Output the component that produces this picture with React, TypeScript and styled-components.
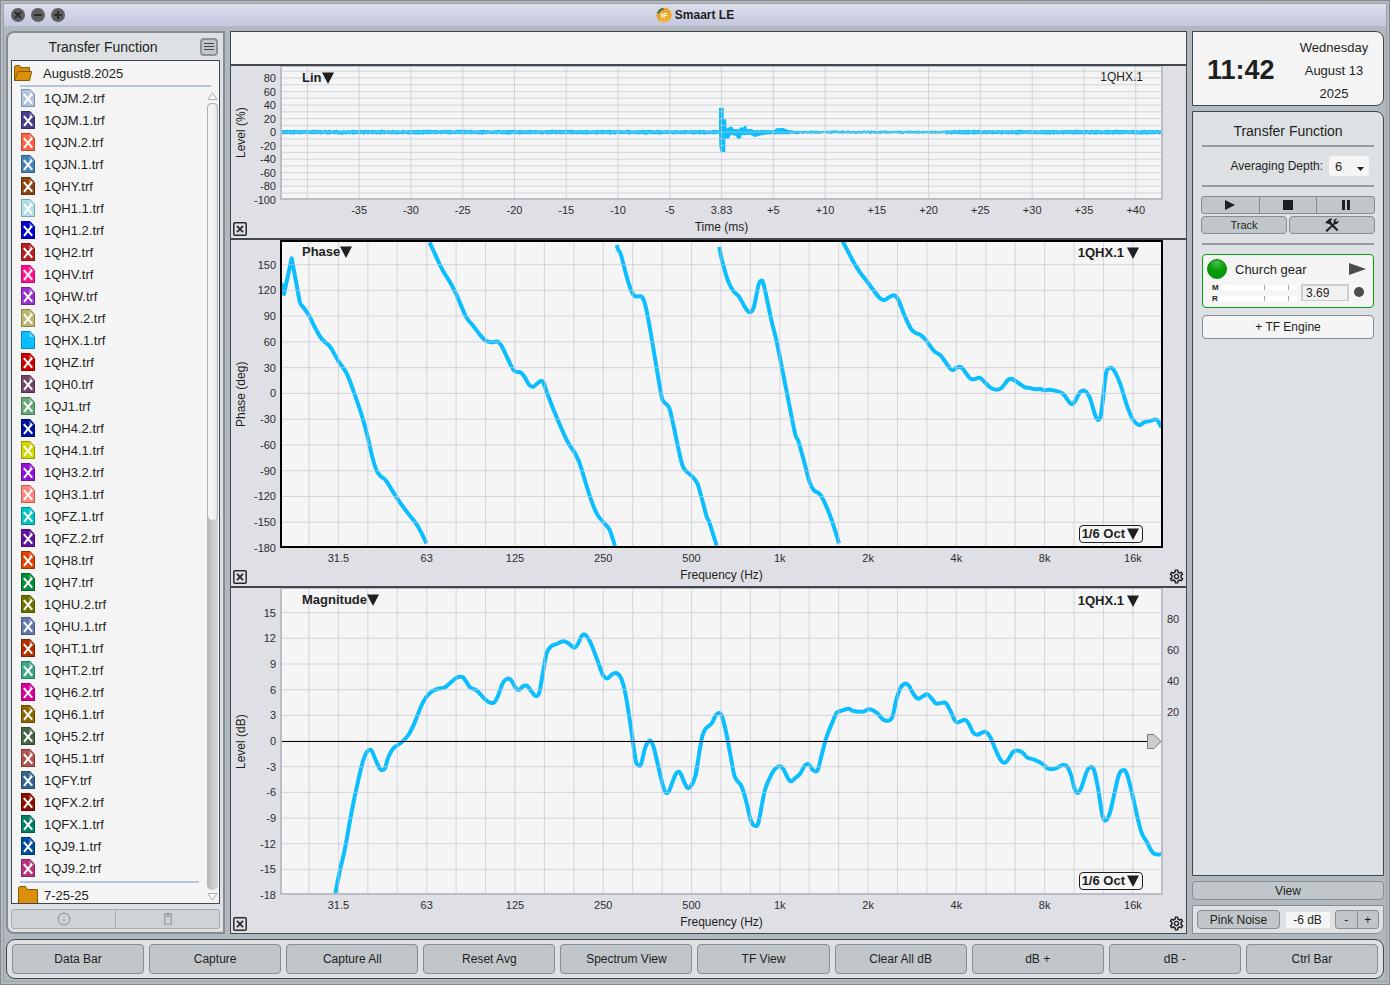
import React from "react";
import styled, { createGlobalStyle } from "styled-components";
import { MdOutlineDelete, MdOutlineSettings } from "react-icons/md";
import { Info } from "lucide-react";

const color = {
  ink: "#1e1f21",
  line: "#41484d",
  edge: "#858e94",
  chrome: "#b1b9bf",
  panel: "#dde1e4",
  paper: "#f5f5f5",
  button: "#c0c6ca",
  chart: "#dfe0e5",
  grid: "rgba(196, 199, 208, 0.7)",
  trace: "#0bbeff",
};

const GlobalStyle = createGlobalStyle`
  *, *::before, *::after { box-sizing: border-box; }
  body {
    margin: 0;
    background: ${color.chrome};
    color: ${color.ink};
    font-family: "Liberation Sans", Arial, Helvetica, sans-serif;
    font-size: 12px;
  }
  button, input, select { font: inherit; color: inherit; margin: 0; padding: 0; }
  button { cursor: pointer; }
  svg { display: block; }
`;

/* ---------- window frame ---------- */

const Frame = styled.div`
  height: 100vh;
  min-height: 720px;
  min-width: 1000px;
  display: flex;
  border: 1px solid #85898d;
  padding: 2px;
  background: #b5babe;
`;

const Inner = styled.div`
  flex: 1;
  min-width: 0;
  display: flex;
  flex-direction: column;
  border: 1px solid #9aa1a7;
  background: ${color.chrome};
`;

const TitleBar = styled.header`
  position: relative;
  height: 22px;
  flex: none;
  display: flex;
  align-items: center;
  justify-content: center;
  gap: 3px;
  background: linear-gradient(#dcdeec, #c4c7de);
`;

const AppName = styled.h1`
  margin: 0;
  font-size: 12px;
  line-height: 16px;
  font-weight: bold;
`;

const WindowButtons = styled.div`
  position: absolute;
  left: 7px;
  top: 4px;
  display: flex;
  gap: 6px;
`;

const WindowButton = styled.button`
  width: 14px;
  height: 14px;
  border: 0;
  border-radius: 50%;
  background: #5f5f61;
  color: #2c2c2e;
`;

const Workspace = styled.div`
  flex: 1;
  min-height: 0;
  display: flex;
  flex-direction: column;
  gap: 5px;
  padding: 5px 2px 2px;
`;

const Columns = styled.div`
  flex: 1;
  min-height: 0;
  display: grid;
  grid-template-columns: 219px minmax(0, 1fr) 192px;
  grid-template-rows: minmax(0, 1fr);
  gap: 5px;
`;

/* ---------- data bar ---------- */

const DataBar = styled.aside`
  display: flex;
  flex-direction: column;
  padding: 0 3px 3px;
  border: 2px solid ${color.edge};
  border-radius: 8px 0 0 8px;
  background: ${color.panel};
`;

const DataHead = styled.div`
  flex: none;
  height: 27px;
  display: flex;
  align-items: center;
  padding-right: 2px;
`;

const PanelTitle = styled.h2`
  flex: 1;
  margin: 0;
  font-size: 14px;
  line-height: 20px;
  font-weight: normal;
  text-align: center;
`;

const DataTitle = styled(PanelTitle)`
  padding-right: 5px;
`;

const MenuButton = styled.button`
  width: 18px;
  height: 18px;
  display: grid;
  place-items: center;
  border: 2px solid #8d9498;
  border-radius: 4px;
  background: #c3c8cb;
`;

const ListBox = styled.div`
  flex: 1;
  min-height: 0;
  overflow: hidden;
  display: flex;
  flex-direction: column;
  border: 1px solid ${color.line};
  background: ${color.paper};
  font-size: 13px;
`;

const FolderRow = styled.div<{ $open?: boolean }>`
  flex: none;
  height: 24px;
  display: flex;
  align-items: center;
  gap: ${(p) => (p.$open ? 11 : 6)}px;
  padding-left: ${(p) => (p.$open ? 2 : 6)}px;
`;

const Divider = styled.div<{ $wide?: boolean }>`
  flex: none;
  height: 2px;
  margin: ${(p) => (p.$wide ? "0 8px" : "2px 8px 0")};
  background: #b9c6da;
`;

const ListScroll = styled.div`
  flex: 1;
  min-height: 0;
  display: grid;
  grid-template-columns: minmax(0, 1fr) 12px;
  grid-template-rows: minmax(0, 1fr);
`;

const Files = styled.div`
  overflow: hidden;
`;

const FileList = styled.ul`
  margin: 0;
  padding: 0;
  list-style: none;
`;

const FileRow = styled.li`
  height: 22px;
  display: flex;
  align-items: center;
  gap: 9px;
  padding-left: 9px;
`;

const FileName = styled.span`
  padding-top: 1px;
  line-height: 21px;
`;

const ScrollBar = styled.div`
  display: flex;
  flex-direction: column;
  gap: 3px;
  padding: 5px 1px 2px 0;
`;

const ScrollTrack = styled.div`
  flex: 1;
  border-radius: 5px;
  background: linear-gradient(90deg, #b4b4b4, #cfcfcf 60%, #d6d6d6);
`;

const ScrollThumb = styled.div`
  height: 53%;
  border: 1px solid #b0b0b0;
  border-bottom-color: #e8e8e8;
  border-radius: 5px;
  background: linear-gradient(90deg, #f4f4f4 40%, #e6e6e6);
`;

const Segmented = styled.div<{ $height: number }>`
  flex: none;
  height: ${(p) => p.$height}px;
  display: flex;
  overflow: hidden;
  border: 1px solid ${color.edge};
  border-radius: 3px;
  background: ${color.button};
`;

const DataTools = styled(Segmented)`
  margin-top: 5px;
  border-color: #a7adb2;
  background: #ced3d6;
`;

const Segment = styled.button<{ $soft?: boolean }>`
  flex: 1;
  display: grid;
  place-items: center;
  border: 0 solid ${(p) => (p.$soft ? "#a7adb2" : color.edge)};
  background: transparent;
  color: ${(p) => (p.$soft ? "#979ca0" : color.ink)};
  &:not(:first-child) {
    border-left-width: 1px;
  }
`;

/* ---------- charts ---------- */

const Charts = styled.main`
  display: grid;
  grid-template-rows: 32px minmax(0, 172fr) minmax(0, 346fr) minmax(0, 345fr);
  gap: 2px;
  border: 1px solid ${color.line};
  background: ${color.line};
`;

const Readout = styled.div`
  background: ${color.paper};
`;

const ChartPane = styled.section`
  display: grid;
  grid-template-columns: 49px minmax(0, 1fr) 23px;
  grid-template-rows: minmax(0, 1fr) 18px 20px;
  background: ${color.chart};
`;

const YAxis = styled.div`
  position: relative;
`;

const AxisName = styled.div`
  position: absolute;
  left: 2px;
  top: 0;
  bottom: 0;
  line-height: 16px;
  text-align: center;
  writing-mode: vertical-rl;
  transform: rotate(180deg);
`;

const Ticks = styled.svg`
  width: 100%;
  height: 100%;
  overflow: visible;
  font-size: 11px;
  fill: #2c2d30;
`;

const XTicks = styled(Ticks)`
  grid-column: 2;
`;

const Plot = styled.div<{ $active?: boolean }>`
  position: relative;
  background: ${color.paper};
  &::after {
    content: "";
    position: absolute;
    inset: 0;
    border: 2px solid ${(p) => (p.$active ? "#000" : "#bbbdc4")};
    border-top-width: ${(p) => (p.$active ? 2 : 1)}px;
    pointer-events: none;
  }
`;

const PlotArea = styled.svg`
  position: absolute;
  inset: 0;
  width: 100%;
  height: 100%;
`;

const PlotButton = styled.button<{ $place: "type" | "trace" | "oct" }>`
  position: absolute;
  z-index: 1;
  display: flex;
  align-items: center;
  gap: ${(p) => (p.$place === "trace" ? 3 : p.$place === "oct" ? 2 : 0)}px;
  height: 18px;
  line-height: 18px;
  font-size: 13px;
  font-weight: bold;
  border: 0;
  background: transparent;
  ${(p) => p.$place === "type" && "left: 22px; top: 3px;"}
  ${(p) => p.$place === "trace" && "right: 24px; top: 4px;"}
  ${(p) =>
    p.$place === "oct" &&
    `right: 20px; bottom: 5px; padding: 0 3px 0 2px; line-height: 14px;
     border: 1px solid ${color.ink}; border-radius: 4px; background: ${color.paper};`}
`;

const TraceName = styled.div`
  position: absolute;
  z-index: 1;
  right: 20px;
  top: 3px;
  line-height: 16px;
`;

const CornerButton = styled.button<{ $side: "left" | "right" }>`
  grid-row: 3;
  align-self: end;
  justify-self: ${(p) => (p.$side === "left" ? "start" : "end")};
  margin: ${(p) => (p.$side === "left" ? "0 0 2px 2px" : "0 1px 1px 0")};
  border: 0;
  background: transparent;
`;

const XName = styled.div`
  grid-column: 2;
  grid-row: 3;
  line-height: 19px;
  text-align: center;
`;

/* ---------- control bar ---------- */

const ControlBar = styled.aside`
  display: flex;
  flex-direction: column;
  gap: 5px;
`;

const Clock = styled.div`
  flex: none;
  height: 75px;
  display: flex;
  align-items: center;
  justify-content: space-between;
  padding: 3px 8px 0 14px;
  border: 1px solid ${color.line};
  border-radius: 0 8px 8px 0;
  background: ${color.paper};
`;

const Time = styled.div`
  font-size: 27px;
  font-weight: bold;
`;

const DateLines = styled.div`
  width: 82px;
  font-size: 13px;
  line-height: 23px;
  text-align: center;
`;

const Controls = styled.section`
  flex: 1;
  min-height: 0;
  padding: 0 9px;
  display: flex;
  flex-direction: column;
  border: 1px solid ${color.line};
  border-radius: 0 8px 0 0;
  background: ${color.panel};
`;

const ControlsTitle = styled(PanelTitle)`
  flex: none;
  line-height: 34px;
  padding-top: 2px;
  height: 33px;
`;

const Rule = styled.hr`
  flex: none;
  width: 100%;
  height: 2px;
  margin: 0;
  border: 0;
  background: #959a9e;
`;

const DepthRow = styled.label`
  flex: none;
  height: 38px;
  display: flex;
  align-items: center;
  justify-content: flex-end;
  gap: 6px;
  padding-right: 5px;
`;

const SelectWrap = styled.span`
  position: relative;
  display: block;
`;

const DepthSelect = styled.select`
  appearance: none;
  display: block;
  width: 40px;
  height: 20px;
  padding-left: 6px;
  border: 0;
  border-radius: 3px;
  background: ${color.paper};
  font-size: 13px;
`;

const SelectArrow = styled.svg`
  position: absolute;
  right: 5px;
  bottom: 5px;
  pointer-events: none;
`;

const Transport = styled(Segmented)`
  margin: 9px -1px 0;
`;

const ToolRow = styled.div`
  display: grid;
  grid-template-columns: 1fr 1fr;
  gap: 2px;
  margin: 2px -1px 9px;
`;

const Button = styled.button<{ $height: number; $size?: number }>`
  height: ${(p) => p.$height}px;
  display: grid;
  place-items: center;
  border: 1px solid ${color.edge};
  border-radius: 4px;
  background: ${color.button};
  font-size: ${(p) => p.$size ?? 12}px;
`;

const EngineCard = styled.div`
  flex: none;
  height: 54px;
  margin: 9px 0 7px;
  padding: 4px 7px 0 4px;
  border: 1px solid #0b9d12;
  border-radius: 4px;
  background: ${color.paper};
`;

const EngineTop = styled.div`
  height: 20px;
  display: flex;
  align-items: center;
  gap: 8px;
  font-size: 13px;
`;

const StatusLight = styled.span`
  width: 20px;
  height: 20px;
  border: 1px solid #078a0b;
  border-radius: 50%;
  background: radial-gradient(circle at 50% 15%, #4cc04c, #049b06 50%);
`;

const EngineName = styled.span`
  flex: 1;
`;

const EngineBottom = styled.div`
  display: flex;
  align-items: center;
  gap: 4px;
  margin-top: 3px;
  padding-left: 5px;
`;

const Meters = styled.div`
  flex: 1;
  display: grid;
  gap: 1px;
`;

const MeterRow = styled.div`
  height: 10px;
  display: flex;
  align-items: center;
  font-size: 8px;
  font-weight: bold;
`;

const MeterLabel = styled.span`
  width: 7px;
`;

const MeterTrack = styled.span`
  flex: 1;
  display: grid;
  grid-template-columns: 58fr 30fr 12fr;
  height: 5px;
  background: #fff;
`;

const MeterZone = styled.span`
  &:not(:first-child) {
    border-left: 1px solid #a4a4a4;
  }
`;

const DelayInput = styled.input`
  width: 48px;
  height: 17px;
  padding-left: 3px;
  border: 2px solid #cccdce;
  border-bottom-width: 1px;
  background: #f1f1f1;
  font-size: 12px;
`;

const Dot = styled.span`
  width: 10px;
  height: 10px;
  margin: 0 2px 2px 1px;
  border-radius: 50%;
  background: #4c4c4c;
`;

const EngineButton = styled(Button)`
  flex: none;
  background: ${color.paper};
`;

const ViewButton = styled(Button)`
  flex: none;
`;

const Generator = styled.div`
  flex: none;
  height: 29px;
  display: flex;
  align-items: center;
  justify-content: space-between;
  padding: 0 4px;
  border: 1px solid ${color.edge};
  border-radius: 0 0 8px 0;
  background: ${color.panel};
`;

const NoiseButton = styled(Button)`
  width: 83px;
`;

const GainInput = styled.input`
  width: 44px;
  height: 16px;
  border: 0;
  background: ${color.paper};
  text-align: center;
`;

const GainButtons = styled(Segmented)`
  width: 44px;
`;

const CommandBar = styled.nav`
  flex: none;
  height: 40px;
  display: flex;
  gap: 5px;
  padding: 4px 5px;
  border: 1px solid ${color.line};
  border-radius: 9px;
  background: ${color.panel};
`;

const CommandButton = styled(Button)`
  flex: 1;
`;

/* ---------- icons ---------- */

const Triangle = () => (
  <svg width="12" height="12" viewBox="0 0 12 12" aria-hidden="true">
    <path d="M0 0.5H12L6 12Z" fill={color.ink} />
  </svg>
);

const Logo = () => (
  <svg width="16" height="16" viewBox="0 0 16 16" aria-hidden="true">
    <circle cx="8" cy="8" r="7.6" fill="#eda527" />
    <path d="M2 6.4A6.4 6.4 0 0 1 7.6 1.9" stroke="#25775f" strokeWidth="2" fill="none" />
    <path d="M13 11.5A6.2 6.2 0 0 1 4 12.5" stroke="#f9cf6b" strokeWidth="1" fill="none" />
    <text x="8.4" y="10.9" fontSize="8" fontWeight="bold" fill="#fff" textAnchor="middle">
      iF
    </text>
  </svg>
);

const WindowGlyph = ({ d }: { d: string }) => (
  <svg width="14" height="14" viewBox="0 0 14 14" fill="none" stroke="currentColor" strokeWidth="2">
    <path d={d} />
  </svg>
);

const FolderOpen = () => (
  <svg width="18" height="16" viewBox="0 0 18 16" aria-hidden="true">
    <path d="M.5 15.5V1.5L1.5.5H5.5L7 2.5H15.5V7" fill="#d98c0a" stroke="#8a5a08" />
    <path d="M.5 15.5L4.2 6.5H17.6L15.6 15.5Z" fill="#dc8f0b" stroke="#8a5a08" strokeLinejoin="round" />
  </svg>
);

const FolderClosed = () => (
  <svg width="20" height="18" viewBox="0 0 20 18" aria-hidden="true">
    <path d="M.5 17.5V1.5L1.5.5H7.5L9 3.5H19.5V17.5Z" fill="#dc8f0b" stroke="#8a5a08" />
  </svg>
);

const FileIcon = ({ fill, marked }: { fill: string; marked: boolean }) => (
  <svg width="14" height="18" viewBox="0 0 14 18" aria-hidden="true">
    <path d="M0 0H9L14 5.5V18H0Z" fill={fill} />
    <path d="M.5.5H9L13.5 5.5V17.5H.5Z" fill="none" stroke="#000" strokeOpacity=".26" />
    <path d="M8.5 1.5V6H12.6Z" fill="#fff" fillOpacity=".45" />
    {marked && <path d="M2.8 5.2L11.2 14.6M11 5L3 14.8" stroke="#fff" strokeWidth="2" />}
  </svg>
);

const CloseBox = () => (
  <svg width="14" height="14" viewBox="0 0 14 14" fill="none" stroke="#2b2b2d">
    <rect x=".8" y=".8" width="12.4" height="12.4" rx="1" strokeWidth="1.5" />
    <path d="M4 3.8L10 10.2M10 3.8L4 10.2" strokeWidth="1.8" />
  </svg>
);

const Tools = () => (
  <svg width="14" height="14" viewBox="0 0 14 14" aria-hidden="true" fill={color.ink}>
    <path d="M3.6 5.2L5.4 3.6L13.4 11.8L12 13.2Z" />
    <path d="M.4 4.6L3.6 1.4Q5.6 0 7.6 1L5.8 2.4L6.4 3.4L3.4 6L2.6 5.2L1.6 5.8Z" />
    <path d="M1 12L8.6 5.2Q7.8 2.6 9.6 1.2Q10.8.4 12 .7L10.2 2.8L11.2 3.9L13.5 2.3Q13.8 4.4 12.4 5.6Q11.2 6.6 9.8 6.3L2.6 13.4Q1.6 14 .8 13.2Q.4 12.6 1 12Z" />
  </svg>
);

const ScrollArrow = ({ d }: { d: string }) => (
  <svg width="11" height="8" viewBox="0 0 11 8" fill="#fafafa" stroke="#adadad">
    <path d={d} />
  </svg>
);

/* ---------- trace data ---------- */

type Pt = [number, number];

/* Catmull-Rom spline through the measured points. */
const smooth = (flat: number[], shift = 0) => {
  const p: Pt[] = [];
  for (let i = 0; i < flat.length; i += 2) p.push([flat[i] + shift, flat[i + 1]]);
  let d = `M${p[0][0]} ${p[0][1]}`;
  for (let i = 0; i < p.length - 1; i++) {
    const a = p[i - 1] ?? p[i];
    const b = p[i];
    const c = p[i + 1];
    const e = p[i + 2] ?? c;
    d += `C${b[0] + (c[0] - a[0]) / 6} ${b[1] + (c[1] - a[1]) / 6} ${c[0] - (e[0] - b[0]) / 6} ${c[1] - (e[1] - b[1]) / 6} ${c[0]} ${c[1]}`;
  }
  return d;
};

const HALF = 1380;

const phaseTraces = [
  "M154 145L162 177L185 70L198 140L210 205" + smooth([210, 205, 235, 238, 256, 280, 276, 313, 300, 335, 325, 378, 350, 415, 373, 475, 398, 550, 414, 610, 428, 670, 440, 707, 452, 724, 468, 737, 500, 788, 530, 830, 558, 865, 575, 895, 589, 925]),
  smooth([599, 22, 630, 90, 645, 118, 662, 145, 679, 178, 708, 245, 730, 273, 748, 297, 767, 317, 783, 322, 803, 320, 815, 333, 835, 375, 850, 404, 858, 410, 873, 413, 885, 428, 898, 450, 910, 455, 920, 447, 932, 438, 940, 442, 950, 470, 975, 535, 1010, 615, 1035, 655, 1050, 688, 1080, 785, 1100, 835, 1120, 862, 1138, 883, 1155, 933]),
  smooth([1160, 30, 1165, 45, 1173, 60, 1190, 125, 1205, 170, 1215, 184, 1235, 185, 1245, 207, 1258, 270, 1280, 400, 1295, 485, 1303, 502, 1317, 517, 1328, 560, 1345, 640, 1357, 690, 1367, 707, 1385, 723, 1402, 745, 1414, 785, 1430, 845, 1438, 862, 1460, 932]),
  smooth([88, 36, 94, 68, 104, 105, 115, 140, 130, 168, 147, 185, 160, 208, 172, 227, 182, 231, 192, 215, 205, 152, 213, 137, 222, 152, 245, 260, 260, 320, 290, 470, 315, 595, 325, 618, 345, 690, 360, 745, 372, 766, 390, 778, 405, 805, 425, 855, 447, 925], HALF),
  smooth([457, 17, 490, 80, 512, 115, 530, 138, 550, 165, 570, 190, 585, 195, 597, 187, 612, 181, 625, 195, 645, 245, 662, 280, 675, 293, 690, 299, 705, 312, 732, 348, 752, 362, 780, 400, 790, 405, 800, 398, 815, 398, 840, 430, 855, 432, 868, 428, 880, 437, 900, 457, 920, 464, 935, 458, 955, 434, 967, 432, 985, 444, 1005, 457, 1020, 459, 1035, 463, 1050, 462, 1065, 466, 1080, 464, 1105, 470, 1120, 477, 1140, 504, 1150, 506, 1160, 490, 1172, 470, 1187, 469, 1200, 490, 1218, 547, 1230, 550, 1238, 500, 1248, 415, 1257, 400, 1270, 403, 1290, 445, 1312, 515, 1328, 552, 1347, 570, 1362, 562, 1380, 558, 1400, 554, 1414, 577], HALF),
];

const magnitudeTraces = [
  smooth([315, 930, 330, 855, 345, 790, 365, 680, 385, 585, 400, 525, 410, 502, 417, 496, 425, 497, 437, 525, 450, 552, 457, 555, 465, 550, 475, 517, 490, 490, 515, 472, 535, 450, 553, 415, 575, 360, 590, 335, 605, 320, 625, 311, 645, 307, 665, 290, 682, 277, 700, 278, 720, 307, 740, 316, 765, 343, 780, 353, 793, 352, 805, 330, 818, 295, 830, 282, 842, 284, 858, 310, 868, 314, 880, 303, 892, 303, 905, 320, 917, 333, 928, 322, 940, 255, 950, 205, 962, 185, 980, 177, 1000, 169, 1015, 175, 1032, 188, 1043, 178, 1055, 153, 1065, 149, 1080, 170, 1100, 220, 1115, 262, 1122, 275, 1133, 280, 1145, 269, 1158, 264, 1172, 277, 1185, 320, 1200, 410, 1210, 480, 1218, 530, 1225, 541, 1233, 538, 1245, 490, 1255, 470, 1263, 468, 1272, 490, 1285, 545, 1297, 595, 1305, 620, 1315, 622, 1325, 598, 1338, 566, 1350, 563, 1362, 590, 1373, 609, 1385, 600, 1397, 570, 1402, 540]),
  smooth([17, 570, 22, 540, 30, 490, 38, 450, 48, 430, 65, 415, 78, 390, 90, 385, 98, 400, 110, 450, 125, 530, 135, 577, 155, 605, 170, 655, 182, 705, 192, 721, 203, 720, 210, 690, 225, 615, 245, 567, 258, 549, 272, 544, 283, 557, 295, 582, 305, 589, 315, 580, 330, 567, 345, 541, 357, 539, 370, 556, 383, 555, 395, 510, 410, 455, 430, 405, 440, 383, 452, 378, 475, 371, 490, 378, 518, 380, 538, 373, 560, 383, 580, 404, 598, 406, 608, 393, 620, 340, 632, 308, 645, 296, 657, 303, 672, 330, 685, 341, 700, 333, 713, 328, 727, 343, 740, 356, 765, 353, 780, 375, 795, 407, 805, 412, 825, 404, 837, 418, 850, 443, 863, 449, 885, 440, 900, 455, 915, 490, 932, 525, 945, 533, 957, 520, 970, 500, 985, 497, 998, 503, 1012, 518, 1030, 523, 1055, 535, 1075, 551, 1095, 551, 1118, 540, 1132, 545, 1143, 570, 1155, 615, 1165, 623, 1175, 605, 1190, 560, 1200, 547, 1212, 555, 1225, 615, 1238, 695, 1250, 704, 1262, 675, 1285, 575, 1298, 556, 1310, 565, 1325, 620, 1352, 735, 1370, 770, 1390, 805, 1414, 808], HALF),
];

/* Noise floor of the impulse response, from a fixed-seed generator. */
const noiseFloor = (() => {
  let seed = 7;
  const next = () => (seed = (seed * 16807) % 2147483647) / 2147483647;
  let top = "";
  let bottom = "";
  for (let x = 152; x <= 2796; x += 3) {
    const quiet = x > 1680 && x < 2150 ? 2 : 0;
    top += `L${x} ${(212 + quiet - next() * 3).toFixed(1)}`;
    bottom = `L${x} ${(221 - quiet + next() * 3).toFixed(1)}` + bottom;
  }
  return `M152 216${top}${bottom}Z`;
})();

const impulse =
  "M1467 214V143H1481V178H1488L1490 206L1500 200L1507 200L1510 207L1527 208L1533 201L1541 203V198H1549L1550 207L1566 208L1572 213L1600 216L1628 213L1640 205L1660 204L1672 209L1695 213H1706V217L1702 224L1690 218L1650 218L1610 223L1588 227L1575 231L1560 224L1535 226L1532 236H1522L1518 228L1502 224L1497 236H1486V276H1472L1468 258Z";

const freqLines = Array.from({ length: 29 }, (_, k) => (87 + k * 88.28) / 26.49);
const freqTicks = ["31.5", "63", "125", "250", "500", "1k", "2k", "4k", "8k", "16k"].map(
  (label, i) => ({ label, at: freqLines[1 + i * 3] }),
);

const timeLines = Array.from({ length: 17 }, (_, k) => (27.4 + k * 51.77) / 8.83);
const timeTicks = ["-35", "-30", "-25", "-20", "-15", "-10", "-5", "3.83", "+5", "+10", "+15", "+20", "+25", "+30", "+35", "+40"].map(
  (label, i) => ({ label, at: timeLines[i + 1] }),
);

const range = (from: number, step: number, count: number, start: number, pitch: number) =>
  Array.from({ length: count }, (_, i) => ({ label: String(from + step * i), at: start + pitch * i }));

const levelTicks = range(80, -20, 10, 8.96, 10.1);
const levelLines = Array.from({ length: 20 }, (_, i) => 3.9 + i * 5.05);
const phaseTicks = range(150, -30, 12, 8.01, 8.363);
const dbTicks = range(15, -3, 12, 8.03, 8.363);
const coherenceTicks = range(80, -20, 4, 10.2, 10.1);

/* ---------- chart ---------- */

interface Tick {
  label: string;
  at: number;
}

interface ChartProps {
  title: string;
  yName: string;
  xName: string;
  xLines: number[];
  yLines: number[];
  xTicks: Tick[];
  yTicks: Tick[];
  rightTicks?: Tick[];
  viewBox: string;
  traces: string[];
  filled?: boolean;
  active?: boolean;
  zeroAt?: number;
}

const Chart = (p: ChartProps) => (
  <ChartPane aria-label={p.title}>
    <YAxis>
      <AxisName>{p.yName}</AxisName>
      <Ticks>
        {p.yTicks.map((t) => (
          <text key={t.label} x="45" y={`${t.at}%`} dy="4" textAnchor="end">
            {t.label}
          </text>
        ))}
      </Ticks>
    </YAxis>
    <Plot $active={p.active}>
      <PlotArea>
        <svg width="100%" height="100%" viewBox={p.viewBox} preserveAspectRatio="none">
          {p.traces.map((d) => (
            <path
              key={d}
              d={d}
              fill={p.filled ? color.trace : "none"}
              stroke={p.filled ? "none" : color.trace}
              strokeWidth="4"
              strokeLinejoin="round"
              vectorEffect="non-scaling-stroke"
            />
          ))}
        </svg>
        {p.xLines.map((x) => (
          <line key={`x${x}`} x1={`${x}%`} x2={`${x}%`} y1="0" y2="100%" stroke={color.grid} />
        ))}
        {p.yLines.map((y) => (
          <line key={`y${y}`} x1="0" x2="100%" y1={`${y}%`} y2={`${y}%`} stroke={color.grid} />
        ))}
        {p.zeroAt !== undefined && (
          <>
            <line
              x1="0"
              x2="100%"
              y1={`${p.zeroAt}%`}
              y2={`${p.zeroAt}%`}
              stroke="#000"
              shapeRendering="crispEdges"
            />
            <svg x="100%" y={`${p.zeroAt}%`} overflow="visible">
              <path d="M-15.5 -6.5H-9L-2 .5L-9 7.5H-15.5Z" fill="#cbcccd" stroke="#77797c" />
            </svg>
          </>
        )}
      </PlotArea>
      <PlotButton $place="type">
        {p.title}
        <Triangle />
      </PlotButton>
      {p.filled ? (
        <TraceName>1QHX.1</TraceName>
      ) : (
        <>
          <PlotButton $place="trace">
            1QHX.1
            <Triangle />
          </PlotButton>
          <PlotButton $place="oct">
            1/6 Oct
            <Triangle />
          </PlotButton>
        </>
      )}
    </Plot>
    <YAxis>
      <Ticks>
        {p.rightTicks?.map((t) => (
          <text key={t.label} x="10" y={`${t.at}%`} dy="4" textAnchor="middle">
            {t.label}
          </text>
        ))}
      </Ticks>
    </YAxis>
    <XTicks>
      {p.xTicks.map((t) => (
        <text key={t.label} x={`${t.at}%`} y="14" textAnchor="middle">
          {t.label}
        </text>
      ))}
    </XTicks>
    <CornerButton $side="left" aria-label="Close graph">
      <CloseBox />
    </CornerButton>
    <XName>{p.xName}</XName>
    {!p.filled && (
      <CornerButton $side="right" aria-label="Graph settings">
        <MdOutlineSettings size={17} />
      </CornerButton>
    )}
  </ChartPane>
);

/* ---------- content ---------- */

const files: [string, string][] = [
  ["1QJM.2", "#b0c4de"], ["1QJM.1", "#483d8b"], ["1QJN.2", "#ff6347"], ["1QJN.1", "#4682b4"],
  ["1QHY", "#8b4513"], ["1QH1.1", "#b0e0e6"], ["1QH1.2", "#0000cd"], ["1QH2", "#b22222"],
  ["1QHV", "#ff1493"], ["1QHW", "#9932cc"], ["1QHX.2", "#bdb76b"], ["1QHX.1", "#0bbeff"],
  ["1QHZ", "#cc0000"], ["1QH0", "#744468"], ["1QJ1", "#66a878"], ["1QH4.2", "#00149c"],
  ["1QH4.1", "#d2d600"], ["1QH3.2", "#9412d2"], ["1QH3.1", "#ff857d"], ["1QFZ.1", "#00c4c4"],
  ["1QFZ.2", "#65149c"], ["1QH8", "#dc4405"], ["1QH7", "#008c3c"], ["1QHU.2", "#707000"],
  ["1QHU.1", "#6478ac"], ["1QHT.1", "#b03000"], ["1QHT.2", "#3ca884"], ["1QH6.2", "#d8009c"],
  ["1QH6.1", "#8c6400"], ["1QH5.2", "#446444"], ["1QH5.1", "#b0544f"], ["1QFY", "#34648c"],
  ["1QFX.2", "#8c1000"], ["1QFX.1", "#008060"], ["1QJ9.1", "#004c9c"], ["1QJ9.2", "#b43480"],
];

const commands = [
  "Data Bar", "Capture", "Capture All", "Reset Avg", "Spectrum View",
  "TF View", "Clear All dB", "dB +", "dB -", "Ctrl Bar",
];

export default function App() {
  return (
    <Frame>
      <GlobalStyle />
      <Inner>
        <TitleBar>
          <WindowButtons>
            <WindowButton aria-label="Close">
              <WindowGlyph d="M4 4L10 10M10 4L4 10" />
            </WindowButton>
            <WindowButton aria-label="Minimize">
              <WindowGlyph d="M3 7H11" />
            </WindowButton>
            <WindowButton aria-label="Zoom">
              <WindowGlyph d="M3 7H11M7 3V11" />
            </WindowButton>
          </WindowButtons>
          <Logo />
          <AppName>Smaart LE</AppName>
        </TitleBar>
        <Workspace>
          <Columns>
            <DataBar>
              <DataHead>
                <DataTitle>Transfer Function</DataTitle>
                <MenuButton aria-label="Data menu">
                  <svg width="10" height="8" viewBox="0 0 10 8" stroke="#43484b">
                    <path d="M0 .5H10M0 3.5H10M0 6.5H10" />
                  </svg>
                </MenuButton>
              </DataHead>
              <ListBox>
                <FolderRow $open>
                  <FolderOpen />
                  <FileName>August8.2025</FileName>
                </FolderRow>
                <Divider $wide />
                <ListScroll>
                  <Files>
                    <FileList>
                      {files.map(([name, fill]) => (
                        <FileRow key={name}>
                          <FileIcon fill={fill} marked={name !== "1QHX.1"} />
                          <FileName>{name}.trf</FileName>
                        </FileRow>
                      ))}
                    </FileList>
                    <Divider />
                    <FolderRow>
                      <FolderClosed />
                      <FileName>7-25-25</FileName>
                    </FolderRow>
                  </Files>
                  <ScrollBar>
                    <ScrollArrow d="M1 7.5L5.5.8L10 7.5Z" />
                    <ScrollTrack>
                      <ScrollThumb />
                    </ScrollTrack>
                    <ScrollArrow d="M1 .5L5.5 7.2L10 .5Z" />
                  </ScrollBar>
                </ListScroll>
              </ListBox>
              <DataTools $height={20}>
                <Segment $soft aria-label="Info">
                  <Info size={14} strokeWidth={2} />
                </Segment>
                <Segment $soft aria-label="Delete">
                  <MdOutlineDelete size={16} />
                </Segment>
              </DataTools>
            </DataBar>

            <Charts>
              <Readout />
              <Chart
                title="Lin"
                yName="Level (%)"
                xName="Time (ms)"
                xLines={timeLines}
                yLines={levelLines}
                xTicks={timeTicks}
                yTicks={levelTicks}
                viewBox="150 18 2649 402"
                traces={[noiseFloor, impulse]}
                filled
              />
              <Chart
                title="Phase"
                yName="Phase (deg)"
                xName="Frequency (Hz)"
                xLines={freqLines}
                yLines={phaseTicks.map((t) => t.at)}
                xTicks={freqTicks}
                yTicks={phaseTicks}
                viewBox="150 15 2649 924"
                traces={phaseTraces}
                active
              />
              <Chart
                title="Magnitude"
                yName="Level (dB)"
                xName="Frequency (Hz)"
                xLines={freqLines}
                yLines={dbTicks.map((t) => t.at)}
                xTicks={freqTicks}
                yTicks={dbTicks}
                rightTicks={coherenceTicks}
                viewBox="150 9 2649 921"
                traces={magnitudeTraces}
                zeroAt={dbTicks[5].at}
              />
            </Charts>

            <ControlBar>
              <Clock>
                <Time>11:42</Time>
                <DateLines>
                  <div>Wednesday</div>
                  <div>August 13</div>
                  <div>2025</div>
                </DateLines>
              </Clock>
              <Controls>
                <ControlsTitle>Transfer Function</ControlsTitle>
                <Rule />
                <DepthRow>
                  Averaging Depth:
                  <SelectWrap>
                    <DepthSelect defaultValue="6">
                      <option>6</option>
                    </DepthSelect>
                    <SelectArrow width="7" height="4" viewBox="0 0 7 4">
                      <path d="M0 0H7L3.5 4Z" fill={color.ink} />
                    </SelectArrow>
                  </SelectWrap>
                </DepthRow>
                <Rule />
                <Transport $height={18}>
                  <Segment aria-label="Play">
                    <svg width="10" height="10" viewBox="0 0 10 10">
                      <path d="M0 0L10 5L0 10Z" fill={color.ink} />
                    </svg>
                  </Segment>
                  <Segment aria-label="Stop">
                    <svg width="10" height="10" viewBox="0 0 10 10">
                      <path d="M0 0H10V10H0Z" fill={color.ink} />
                    </svg>
                  </Segment>
                  <Segment aria-label="Pause">
                    <svg width="8" height="10" viewBox="0 0 8 10">
                      <path d="M0 0H3V10H0ZM5 0H8V10H5Z" fill={color.ink} />
                    </svg>
                  </Segment>
                </Transport>
                <ToolRow>
                  <Button $height={18} $size={11}>
                    Track
                  </Button>
                  <Button $height={18} aria-label="Settings">
                    <Tools />
                  </Button>
                </ToolRow>
                <Rule />
                <EngineCard>
                  <EngineTop>
                    <StatusLight />
                    <EngineName>Church gear</EngineName>
                    <svg width="17" height="12" viewBox="0 0 17 12" aria-hidden="true">
                      <path d="M0 0L17 6L0 12Z" fill="#4c4c4c" />
                    </svg>
                  </EngineTop>
                  <EngineBottom>
                    <Meters>
                      {["M", "R"].map((channel) => (
                        <MeterRow key={channel}>
                          <MeterLabel>{channel}</MeterLabel>
                          <MeterTrack>
                            <MeterZone />
                            <MeterZone />
                            <MeterZone />
                          </MeterTrack>
                        </MeterRow>
                      ))}
                    </Meters>
                    <DelayInput aria-label="Delay" defaultValue="3.69" />
                    <Dot />
                  </EngineBottom>
                </EngineCard>
                <EngineButton $height={24}>+ TF Engine</EngineButton>
              </Controls>
              <ViewButton $height={19}>View</ViewButton>
              <Generator>
                <NoiseButton $height={19}>Pink Noise</NoiseButton>
                <GainInput aria-label="Generator level" defaultValue="-6 dB" />
                <GainButtons $height={19}>
                  <Segment>-</Segment>
                  <Segment>+</Segment>
                </GainButtons>
              </Generator>
            </ControlBar>
          </Columns>
          <CommandBar>
            {commands.map((label) => (
              <CommandButton key={label} $height={30}>
                {label}
              </CommandButton>
            ))}
          </CommandBar>
        </Workspace>
      </Inner>
    </Frame>
  );
}
